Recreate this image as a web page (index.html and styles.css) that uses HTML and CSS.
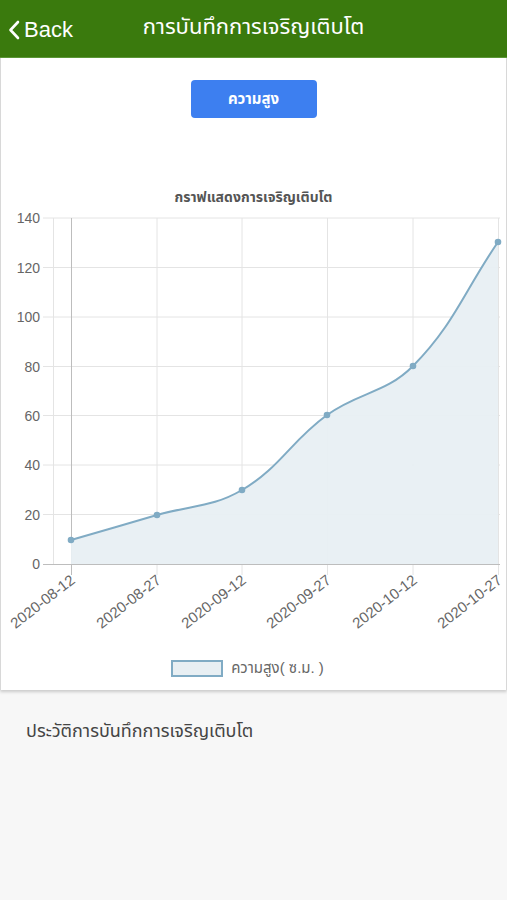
FILE: index.html
```html
<html>
 <head>
  <meta charset="utf-8">
  <link rel="stylesheet" href="styles.css">
 </head>
<body>
 <div class="topbar">
  <a class="back" href="#">
   <svg class="chev" width="12" height="20" viewBox="0 0 12 20"><path d="M10 2 L2.5 10 L10 18" fill="none" stroke="#fff" stroke-width="2.6" stroke-linecap="round" stroke-linejoin="round"/></svg>
   <span>Back</span>
  </a>
  <div class="title">การบันทึกการเจริญเติบโต</div>
 </div>

 <div class="card">
  <div class="btnRow"><button class="tab">ความสูง</button></div>
  <div class="chartTitle">กราฟแสดงการเจริญเติบโต</div>

  <svg class="chart" width="505" height="450" viewBox="1 205 505 450">
   <!-- grid -->
   <g stroke="#e4e4e4" stroke-width="1">
    <line x1="43" y1="218" x2="500" y2="218"/>
    <line x1="43" y1="267.5" x2="500" y2="267.5"/>
    <line x1="43" y1="317" x2="500" y2="317"/>
    <line x1="43" y1="366.5" x2="500" y2="366.5"/>
    <line x1="43" y1="415.5" x2="500" y2="415.5"/>
    <line x1="43" y1="465" x2="500" y2="465"/>
    <line x1="43" y1="514.5" x2="500" y2="514.5"/>
    <line x1="53.5" y1="218" x2="53.5" y2="564"/>
    <line x1="157" y1="218" x2="157" y2="575"/>
    <line x1="242" y1="218" x2="242" y2="575"/>
    <line x1="327.5" y1="218" x2="327.5" y2="575"/>
    <line x1="413" y1="218" x2="413" y2="575"/>
    <line x1="498.5" y1="218" x2="498.5" y2="575"/>
   </g>
   <g stroke="#bdbdbd" stroke-width="1">
    <line x1="43" y1="564.5" x2="500" y2="564.5"/>
    <line x1="71.5" y1="218" x2="71.5" y2="575"/>
   </g>

   <!-- data -->
   <path d="M71,540 C105.4,530 122.8,525 157,515 C191.2,505 212.2,507.5 242,490 C280.3,467.5 290.5,441.5 327,415 C358.9,391.9 385.8,393.5 413,366 C454.2,324.3 464,291.6 498,242 L498,564 L71,564 Z" fill="#e8eff3" fill-opacity="0.95"/>
   <path d="M71,540 C105.4,530 122.8,525 157,515 C191.2,505 212.2,507.5 242,490 C280.3,467.5 290.5,441.5 327,415 C358.9,391.9 385.8,393.5 413,366 C454.2,324.3 464,291.6 498,242" fill="none" stroke="#80abc4" stroke-width="2"/>
   <g fill="#80abc4">
    <circle cx="71" cy="540" r="3.3"/>
    <circle cx="157" cy="515" r="3.3"/>
    <circle cx="242" cy="490" r="3.3"/>
    <circle cx="327" cy="415" r="3.3"/>
    <circle cx="413" cy="366" r="3.3"/>
    <circle cx="498" cy="242" r="3.3"/>
   </g>

   <!-- y labels -->
   <g class="ylab" text-anchor="end">
    <text x="40" y="223">140</text>
    <text x="40" y="272.5">120</text>
    <text x="40" y="322">100</text>
    <text x="40" y="371.5">80</text>
    <text x="40" y="420.5">60</text>
    <text x="40" y="470">40</text>
    <text x="40" y="519.5">20</text>
    <text x="40" y="569">0</text>
   </g>

   <!-- x labels -->
   <g class="xlab" text-anchor="end">
    <text transform="translate(76 582) rotate(-38)">2020-08-12</text>
    <text transform="translate(162 582) rotate(-38)">2020-08-27</text>
    <text transform="translate(247 582) rotate(-38)">2020-09-12</text>
    <text transform="translate(332 582) rotate(-38)">2020-09-27</text>
    <text transform="translate(418 582) rotate(-38)">2020-10-12</text>
    <text transform="translate(503 582) rotate(-38)">2020-10-27</text>
   </g>
  </svg>

  <div class="legend">
   <span class="swatch"></span>
   <span class="legendText">ความสูง( ซ.ม. )</span>
  </div>
 </div>

 <div class="history">ประวัติการบันทึกการเจริญเติบโต</div>
</body>
</html>
```

FILE: styles.css
```css
body {
      margin: 0;
      background-color: #f7f7f7;
      font-family: "Liberation Sans", "Noto Sans Thai", "Noto Sans", sans-serif;
      width: 507px;
     }

.topbar {
         position: relative;
         height: 57px;
         background-color: #3a7a0d;
         border-bottom: 1px solid #5b9636;
         display: flex;
         align-items: center;
         justify-content: center;
         color: #ffffff;
        }

.back {
       position: absolute;
       left: 8px;
       top: 17px;
       display: flex;
       align-items: center;
       gap: 4px;
       color: #ffffff;
       text-decoration: none;
       font-size: 22px;
      }

.title {
        font-size: 22px;
        margin-top: -2px;
       }

.card {
       background-color: #ffffff;
       border-left: 1px solid #d8d8d8;
       border-right: 1px solid #d8d8d8;
       box-shadow: 0 2px 3px rgba(0, 0, 0, 0.18);
       height: 632px;
       display: flex;
       flex-direction: column;
      }

.btnRow {
         display: flex;
         justify-content: center;
         padding-top: 22px;
        }

.tab {
      width: 126px;
      height: 38px;
      border: 0;
      border-radius: 4px;
      background-color: #3d7ff0;
      color: #ffffff;
      font-family: inherit;
      font-size: 15px;
      font-weight: bold;
     }

.chartTitle {
             text-align: center;
             font-size: 14px;
             font-weight: bold;
             color: #555555;
             margin-top: 69px;
             height: 18px;
            }

.chart {
        display: block;
       }

.ylab {
       font-family: "Liberation Sans", sans-serif;
       font-size: 14px;
       fill: #666666;
      }

.xlab {
       font-family: "Liberation Sans", sans-serif;
       font-size: 15px;
       fill: #666666;
      }

.legend {
         display: flex;
         justify-content: center;
         align-items: center;
         gap: 8px;
         margin-top: 2px;
         margin-left: -12px;
        }

.swatch {
         width: 48px;
         height: 13px;
         background-color: #e8eff3;
         border: 2px solid #80abc4;
        }

.legendText {
             font-size: 15px;
             color: #666666;
            }

.history {
          padding: 28px 26px;
          font-size: 18px;
          color: #444444;
         }
```
